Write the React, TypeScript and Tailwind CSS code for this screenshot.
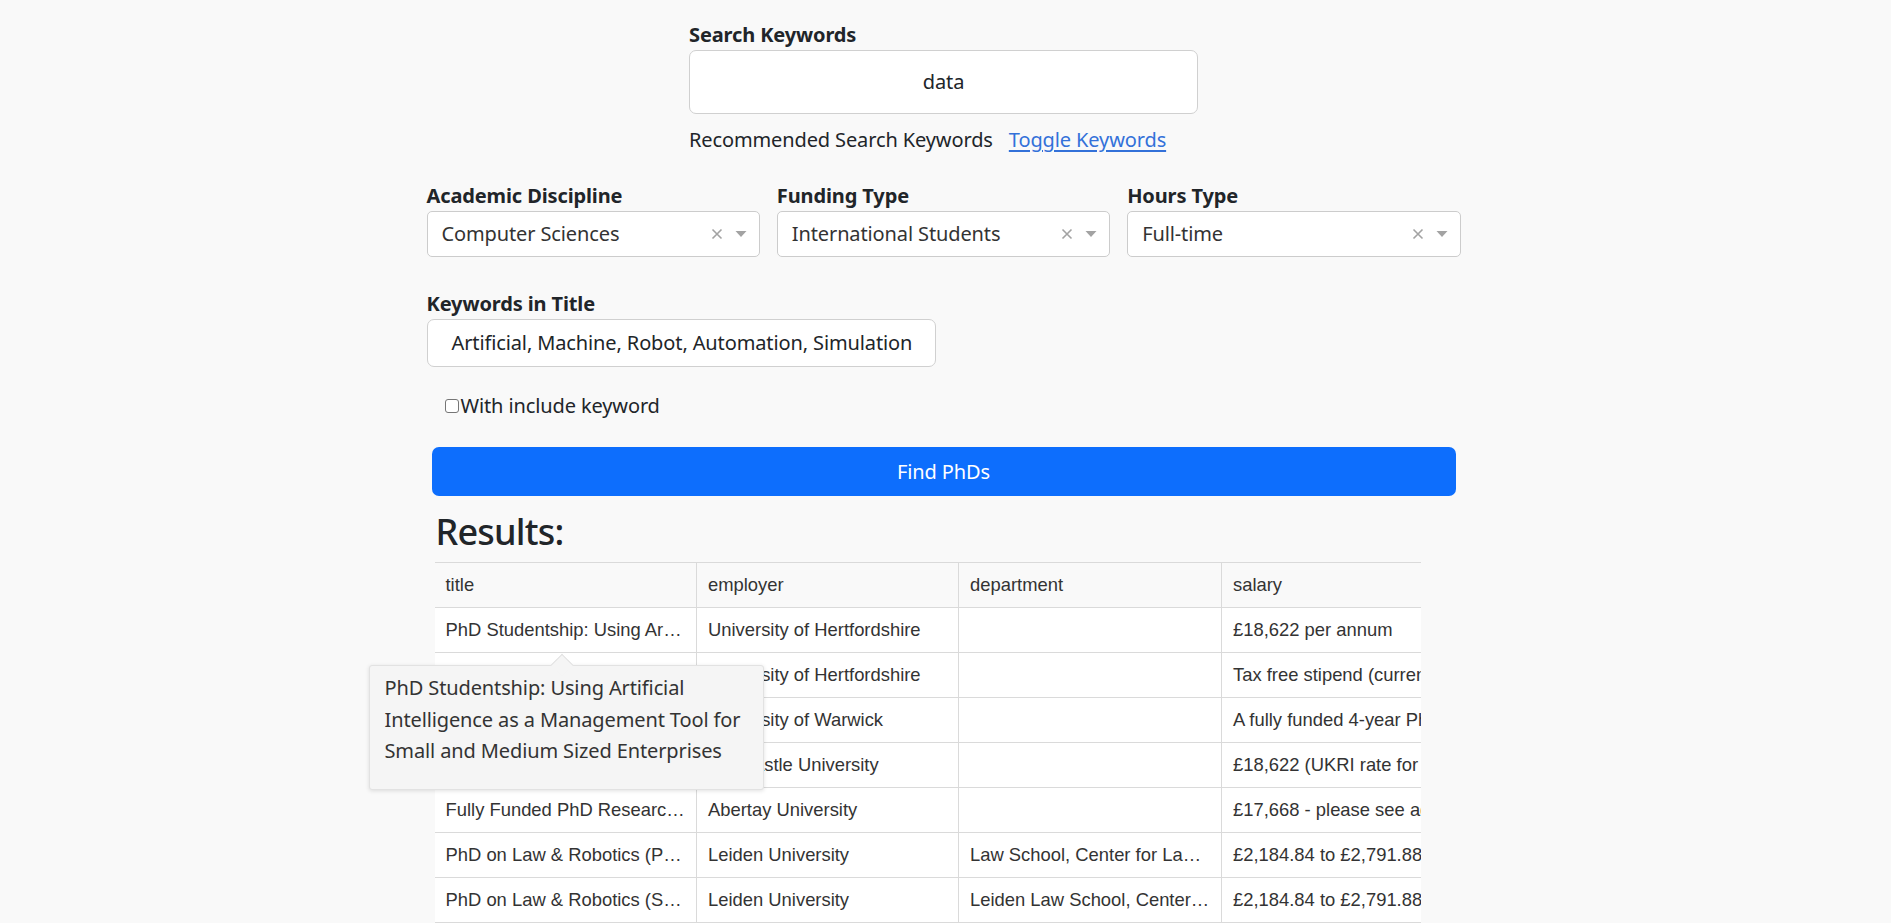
const rows = [
  ["PhD Studentship: Using Artificial Intelligence as a Management Tool for Small and Medium Sized Enterprises", "University of Hertfordshire", "", "£18,622 per annum"],
  ["PhD Studentship: Machine Learning for Robot Perception", "University of Hertfordshire", "", "Tax free stipend (current rate £18,622 per annum)"],
  ["Fully Funded PhD in Simulation of Autonomous Systems", "University of Warwick", "", "A fully funded 4-year PhD studentship"],
  ["PhD Studentship in Automation and Data Science", "Newcastle University", "", "£18,622 (UKRI rate for 2023/24)"],
  ["Fully Funded PhD Research Studentship in Machine Learning", "Abertay University", "", "£17,668 - please see advert for details"],
  ["PhD on Law & Robotics (PhD candidate)", "Leiden University", "Law School, Center for Law and Digital Technologies", "£2,184.84 to £2,791.88 gross per month"],
  ["PhD on Law & Robotics (Second position)", "Leiden University", "Leiden Law School, Center for Law and Digital Technologies", "£2,184.84 to £2,791.88 gross per month"],
];

function Select({ label, value }: { label: string; value: string }) {
  return (
    <div>
      <div className="font-bold leading-[30px] text-[#212529]">{label}</div>
      <div className="flex h-[46px] items-center justify-between rounded-[5px] border border-[#cccccc] bg-white pl-[14px] pr-[12px]">
        <span className="text-[#333333]">{value}</span>
        <div className="flex items-center gap-[12px]">
          <svg width="12" height="12" viewBox="0 0 12 12">
            <path d="M1.5 1.5 L10.5 10.5 M10.5 1.5 L1.5 10.5" stroke="#a3a3a3" strokeWidth="1.6" />
          </svg>
          <svg width="12" height="8" viewBox="0 0 12 8">
            <path d="M0.5 1 L11.5 1 L6 7 Z" fill="#a3a3a3" />
          </svg>
        </div>
      </div>
    </div>
  );
}

export default function App() {
  return (
    <main className="min-h-screen bg-[#f9f9f9] pb-10 font-['Noto_Sans',sans-serif] text-[20px] tracking-[-0.12px] text-[#212529]">
      <div className="ml-[calc(50%-519px)] w-[1034px] pt-[20px]">
        <div className="mx-auto w-[509px]">
          <div className="font-bold leading-[30px]">Search Keywords</div>
          <div className="flex h-[64px] items-center justify-center rounded-[7px] border border-[#d0d0d0] bg-white">
            data
          </div>
          <div className="mt-[11px] flex gap-[16px] leading-[30px]">
            <span>Recommended Search Keywords</span>
            <span className="text-[#3371d9] underline underline-offset-[3px]">Toggle Keywords</span>
          </div>
        </div>

        <div className="mt-[26px] grid grid-cols-3 gap-[17px]">
          <Select label="Academic Discipline" value="Computer Sciences" />
          <Select label="Funding Type" value="International Students" />
          <Select label="Hours Type" value="Full-time" />
        </div>

        <div className="mt-[32px]">
          <div className="font-bold leading-[30px]">Keywords in Title</div>
          <div className="flex h-[48px] w-[509px] items-center rounded-[7px] border border-[#d0d0d0] bg-white pl-[24px]">
            Artificial, Machine, Robot, Automation, Simulation
          </div>
        </div>

        <div className="mt-[24px] flex items-center pl-[18px] leading-[30px]">
          <span className="mr-[2px] h-[14px] w-[14px] rounded-[3px] border border-[#767676] bg-white" />
          <span>With include keyword</span>
        </div>

        <button className="mx-[5px] mt-[26px] flex h-[49px] w-[1024px] items-center justify-center rounded-[7px] bg-[#0d6efd] text-white">
          Find PhDs
        </button>

        <h2 className="ml-[9px] mt-[13px] text-[36px] font-medium leading-[46px] tracking-[-0.8px]">Results:</h2>

        <div className="relative ml-[8px] mt-[7px]">
          <div className="w-[986px] overflow-hidden">
            <table className="w-[1207px] table-fixed border-collapse font-['Liberation_Sans',Arial,sans-serif] text-[18.4px] tracking-normal text-[#333333]">
              <colgroup>
                <col className="w-[262px]" />
                <col className="w-[262px]" />
                <col className="w-[263px]" />
                <col className="w-[420px]" />
              </colgroup>
              <thead>
                <tr className="h-[45px] border-y border-[#dadada] bg-[#f9f9f9]">
                  {["title", "employer", "department", "salary"].map((h, i) => (
                    <th
                      key={h}
                      className={`px-[11px] text-left font-normal ${i > 0 ? "border-l border-[#dadada]" : ""}`}
                    >
                      {h}
                    </th>
                  ))}
                </tr>
              </thead>
              <tbody>
                {rows.map((r, ri) => (
                  <tr key={ri} className="h-[45px] border-b border-[#dadada] bg-white">
                    {r.map((c, ci) => (
                      <td
                        key={ci}
                        className={`overflow-hidden text-ellipsis whitespace-nowrap px-[11px] ${ci > 0 ? "border-l border-[#dadada]" : ""}`}
                      >
                        {c}
                      </td>
                    ))}
                  </tr>
                ))}
              </tbody>
            </table>
          </div>

          <div className="absolute left-[-66px] top-[103px] w-[395px] rounded-[3px] border border-[#e2e2e2] bg-[#f5f5f5] px-[15px] pb-[22px] pt-[6px] leading-[31.5px] text-[#333333] shadow-[0_1px_4px_rgba(0,0,0,0.12)]">
            <div className="absolute left-[184px] top-[-9px] h-[16px] w-[16px] rotate-45 border-l border-t border-[#e2e2e2] bg-[#f5f5f5]" />
            <span className="relative block">PhD Studentship: Using Artificial</span>
            <span className="relative block">Intelligence as a Management Tool for</span>
            <span className="relative block">Small and Medium Sized Enterprises</span>
          </div>
        </div>
      </div>
    </main>
  );
}
